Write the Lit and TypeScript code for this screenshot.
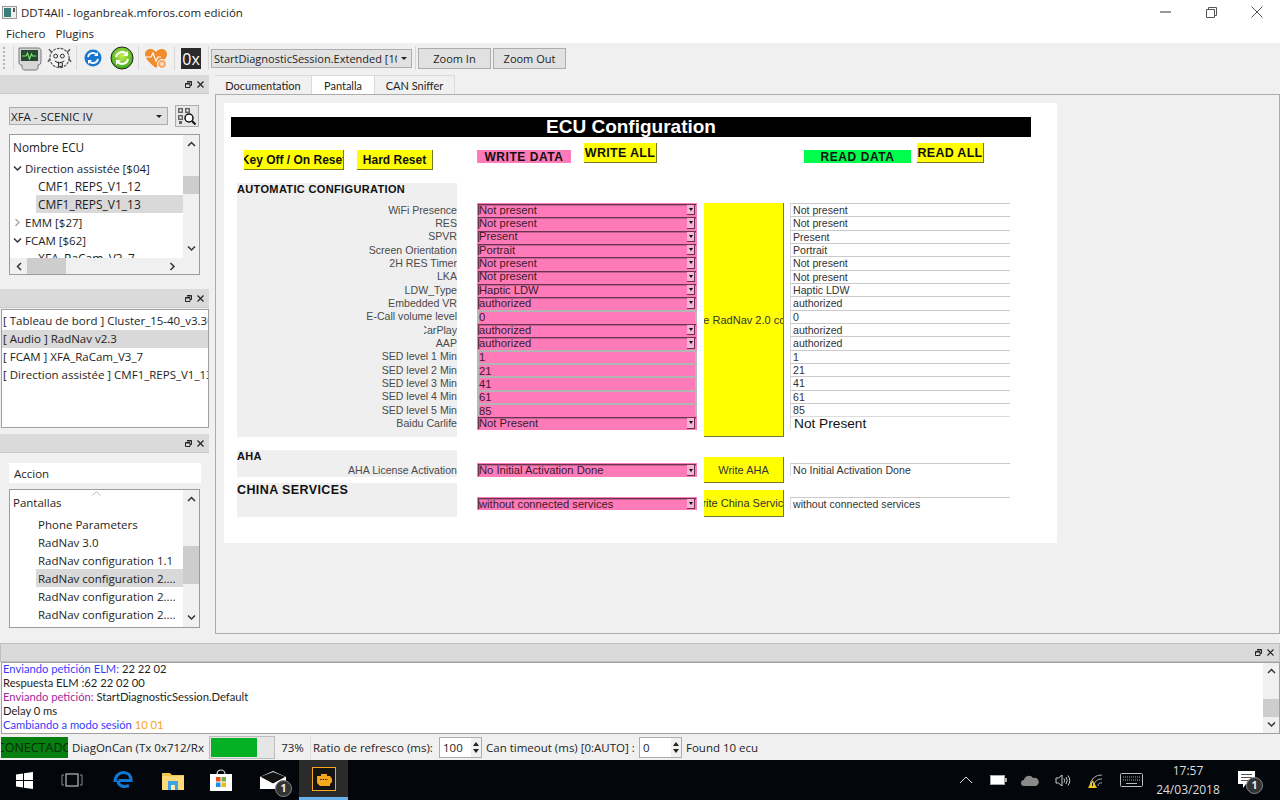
import { LitElement, html, css, svg } from "lit";
import { customElement } from "lit/decorators.js";

const ROW = 40 / 3;
const rows: { label: string; kind: "c" | "i"; value: string; big?: boolean; clip?: number }[] = [
  { label: "WiFi Presence", kind: "c", value: "Not present" },
  { label: "RES", kind: "c", value: "Not present" },
  { label: "SPVR", kind: "c", value: "Present" },
  { label: "Screen Orientation", kind: "c", value: "Portrait" },
  { label: "2H RES Timer", kind: "c", value: "Not present" },
  { label: "LKA", kind: "c", value: "Not present" },
  { label: "LDW_Type", kind: "c", value: "Haptic LDW" },
  { label: "Embedded VR", kind: "c", value: "authorized" },
  { label: "E-Call volume level", kind: "i", value: "0" },
  { label: "CarPlay", kind: "c", value: "authorized", clip: 33 },
  { label: "AAP", kind: "c", value: "authorized" },
  { label: "SED level 1 Min", kind: "i", value: "1" },
  { label: "SED level 2 Min", kind: "i", value: "21" },
  { label: "SED level 3 Min", kind: "i", value: "41" },
  { label: "SED level 4 Min", kind: "i", value: "61" },
  { label: "SED level 5 Min", kind: "i", value: "85" },
  { label: "Baidu Carlife", kind: "c", value: "Not Present", big: true },
];

const OX = 224;
const OY = 103;
const box = (x: number, y: number, w: number, h: number) =>
  `left:${x - OX}px;top:${y - OY}px;width:${w}px;height:${h}px`;

const chevDown = svg`<path d="M1 2.5 L4.5 6 L8 2.5" fill="none" stroke="#333" stroke-width="1.5"/>`;
const chevRight = svg`<path d="M2.5 1 L6 4.5 L2.5 8" fill="none" stroke="#a6a6a6" stroke-width="1.3"/>`;
const chevUp = svg`<path d="M1 6 L4.5 2.5 L8 6" fill="none" stroke="#333" stroke-width="1.5"/>`;
const chevLeft = svg`<path d="M6 1 L2.5 4.5 L6 8" fill="none" stroke="#333" stroke-width="1.5"/>`;
const chevR = svg`<path d="M2.5 1 L6 4.5 L2.5 8" fill="none" stroke="#333" stroke-width="1.5"/>`;
const ico9 = (p: unknown) => html`<svg width="9" height="9" viewBox="0 0 9 9">${p}</svg>`;

const dockBtns = html`<span class="dockbtns">
  <svg width="7" height="7" viewBox="0 0 7 7"><path d="M2 .5h4.500v4h-1.500M.5 2.500h4.500v4h-4.500z" fill="none" stroke="#222"/><path d="M2 1h4.500M.5 3h4.500" stroke="#222"/></svg>
  <svg width="7" height="7" viewBox="0 0 7 7"><path d="M.5 .5L6.500 6.500M6.500 .5L.5 6.500" stroke="#222" stroke-width="1.200"/></svg>
</span>`;

@customElement("app-root")
export class AppRoot extends LitElement {
  static styles = css`
    :host { display: block; width: 1280px; height: 800px; overflow: hidden; background: #f0f0f0;
      font-family: "Open Sans", "Noto Sans", sans-serif; font-size: 11.5px; color: #1e1e1e; }
    .app { display: flex; flex-direction: column; height: 800px; }
    .title { height: 24px; background: #fff; display: flex; align-items: center; flex: none; font-size: 11.5px; padding-left: 2px; gap: 4px; }
    .winbtns { margin-left: auto; display: flex; }
    .winbtns span { width: 46px; height: 24px; display: flex; align-items: center; justify-content: center; }
    .menu { height: 19px; background: #fff; display: flex; gap: 10px; padding-left: 6px; align-items: center; flex: none; }
    .toolbar { height: 30px; display: flex; align-items: center; flex: none; position: relative; padding-left: 3px; }
    .grip { width: 2px; height: 22px; border-left: 2px dotted #b5b5b5; margin-right: 6px; }
    .sep { width: 1px; height: 24px; background: #d8d8d8; flex: none; }
    .tcombo { width: 201px; height: 19px; margin-left: 2px; background: #e1e1e1; border: 1px solid #adadad; display: flex; align-items: center; padding-left: 2px; box-sizing: border-box; overflow: hidden; white-space: nowrap; font-size: 11px; position: relative; }
    .tcombo span { width: 183px; overflow: hidden; display: block; flex: none; }
    .tri { width: 0; height: 0; border: 3px solid transparent; border-top: 3px solid #222; border-bottom: 0; flex: none; }
    .tcombo .tri { margin-left: 4px; }
    .tbtn { width: 73px; height: 21px; box-sizing: border-box; background: #e1e1e1; border: 1px solid #adadad; display: flex; align-items: center; justify-content: center; flex: none; font-size: 11px; }

    .main { height: 567px; display: flex; flex: none; }
    .left { width: 212px; flex: none; padding-top: 2px; box-sizing: border-box; display: flex; flex-direction: column; }
    .dockh { height: 19px; width: 209px; background: #dadada; border: 1px solid #c8c8c8; border-width: 0 0 1px 0; flex: none; display: flex; align-items: center; justify-content: flex-end; box-sizing: border-box; }
    .dockbtns { display: flex; gap: 5px; padding-right: 5px; align-items: center; }
    .d1 { height: 195px; flex: none; width: 209px; box-sizing: border-box; padding: 11px 0 0 9px; }
    .row1 { display: flex; align-items: center; height: 22px; }
    .combo { width: 159px; height: 18px; background: #e1e1e1; border: 1px solid #adadad; box-sizing: border-box; display: flex; align-items: center; padding-left: 1px; justify-content: space-between; }
    .combo .tri { margin-right: 5px; }
    .scan { margin-left: 7px; width: 24px; height: 22px; box-sizing: border-box; border: 1px solid #adadad; background: #e6e6e6; display: flex; align-items: center; justify-content: center; }
    .tree { width: 191px; box-sizing: border-box; border: 1px solid #9c9c9c; background: #fff; display: grid; grid-template-columns: 173px 16px; overflow: hidden; }
    .t1 { margin-top: 7px; height: 141px; grid-template-rows: 123px 16px; }
    .t3 { margin-top: 6px; height: 139px; grid-template-rows: 137px; }
    .tbody { overflow: hidden; position: relative; }
    .th { height: 24px; line-height: 24px; padding-left: 3px; background: #fff; }
    .th.big { font-size: 11.8px; }
    .th.pant { height: 25px; line-height: 26px; }
    .ti { height: 18px; line-height: 17px; white-space: nowrap; display: flex; align-items: center; }
    .ti svg { margin: 0 3px 0 3px; flex: none; }
    .ti.lvl2 { margin-left: 26px; padding-left: 2px; }
    .t1 .ti.lvl2 { font-size: 12px; }
    .ti.lvl2.sel, .li.sel { background: #d9d9d9; }
    .vs { background: #f0f0f0; display: flex; flex-direction: column; align-items: center; justify-content: space-between; position: relative; padding: 5px 0; box-sizing: border-box; }
    .thumb { position: absolute; left: 0; width: 16px; background: #cdcdcd; }
    .t1 .thumb { top: 41px; height: 18px; }
    .t3 .thumb { top: 56px; height: 38px; }
    .hs { grid-column: 1 / 3; background: #f0f0f0; display: flex; align-items: center; justify-content: space-between; padding: 0 22px 0 5px; position: relative; }
    .hthumb { position: absolute; left: 17px; top: 0; width: 39px; height: 16px; background: #cdcdcd; }
    .list { margin: 1px 0 0 1px; width: 208px; height: 119px; box-sizing: border-box; border: 1px solid #a0a0a0; background: #fff; flex: none; padding-top: 2px; overflow: hidden; }
    .li { height: 18px; line-height: 17px; white-space: nowrap; overflow: hidden; padding-left: 1px; }
    .gap6 { height: 6px; flex: none; }
    .d3 { padding: 10px 0 0 9px; width: 209px; box-sizing: border-box; flex: none; }
    .accion { width: 192px; height: 20px; background: #fff; line-height: 21px; padding-left: 5px; box-sizing: border-box; }
    .caret { position: absolute; left: 82px; top: 1px; }

    .right { flex: 1; padding: 2px 0 0 3px; display: flex; flex-direction: column; min-width: 0; }
    .tabs { height: 19px; display: flex; flex: none; }
    .tab { display: flex; align-items: center; justify-content: center; background: #f0f0f0; border: 1px solid #dadada; border-bottom: 0; border-left: 0; box-sizing: border-box; font-family: Lato, "Open Sans", sans-serif; font-size: 11px; }
    .tab.doc { width: 97px; }
    .tab.on { background: #fff; width: 63px; }
    .tab.can { width: 80px; }
    .pane { height: 540px; flex: none; box-sizing: border-box; border: 1px solid #acacac; padding: 8px; background: #f0f0f0; }
    .canvas { position: relative; width: 833px; height: 440px; background: #fff; font-family: "Liberation Sans", Arial, sans-serif; font-size: 10.6px; color: #333; }
    .w { position: absolute; box-sizing: border-box; overflow: hidden; white-space: nowrap; display: flex; align-items: center; }
    .banner { background: #000; color: #fff; font-weight: bold; font-size: 19px; justify-content: center; }
    .yb { background: #ff0; color: #111; font-weight: bold; font-size: 12.5px; justify-content: center; border-right: 1px solid #77772a; border-bottom: 1px solid #77772a; letter-spacing: .3px; }
    .yb.nl { letter-spacing: 0; font-size: 12px; }
    .yb.sm { font-weight: normal; font-size: 11px; letter-spacing: 0; color: #333; }
    .tag { font-weight: bold; font-size: 12px; color: #111; justify-content: center; letter-spacing: .55px; padding-top: 1px; }
    .pink { background: #ff7ab8; }
    .green { background: #00ff4c; }
    .grey { background: #efefef; }
    .h { font-weight: bold; color: #111; font-size: 11px; letter-spacing: .35px; }
    .h.china { font-size: 12.5px; letter-spacing: .4px; }
    .lab { justify-content: flex-end; color: #4a4a4a; }
    .cb { background: #ff7ab8; border: 1px solid #ff7ab8; color: #3a1a2a; padding-left: 1px; font-size: 11.2px; box-shadow: inset 1px 1px 0 #6b3350, inset 2px 2px 0 #c2608f; }
    .arr { position: absolute; right: 1px; top: 1px; bottom: 0; width: 8px; background: #f7b4d4; border-right: 1px solid #6b3350; border-bottom: 1px solid #6b3350; display: flex; align-items: center; justify-content: center; box-sizing: border-box; }
    .arr .tri { border-width: 3px 2.500px 0; border-top-color: #111; }
    .inp { background: #ff7ab8; border-top: 2px solid #b4b4b4; border-left: 2px solid #b8b8b8; border-right: 2px solid #b8b8b8; color: #3a1a2a; padding-left: 0; font-size: 11.2px; }
    .rd { background: #fff; border-top: 1px solid #c9c9c9; border-left: 1px solid #dcdcdc; padding-left: 2px; color: #333; }
    .rd.big { font-size: 13.7px; color: #111; border-top-color: #dcdcdc; padding-left: 3px; }
    .ytext { display: block; flex: none; }

    .logdock { height: 95px; flex: none; padding-top: 3px; box-sizing: border-box; display: flex; flex-direction: column; }
    .logh { height: 19px; flex: none; background: #dadada; border: 1px solid #c0c0c0; box-sizing: border-box; display: flex; justify-content: flex-end; align-items: center; }
    .logb { height: 72px; flex: none; box-sizing: border-box; border: 1px solid #a0a0a0; background: #fff; display: flex; margin: 0 0 0 1px; font-family: Lato, "Open Sans", sans-serif; font-size: 11.2px; }
    .lines { flex: 1; overflow: hidden; padding-left: 1px; }
    .lines div { height: 14px; line-height: 14px; white-space: nowrap; }
    .lines div:first-child { margin-top: -1px; }
    .b { color: #3a3aff; } .p { color: #a5289b; } .o { color: #f5a623; }
    .lvs { width: 16px; background: #f0f0f0; position: relative; display: flex; flex-direction: column; justify-content: space-between; align-items: center; padding: 4px 0; box-sizing: border-box; }
    .lvs i { position: absolute; left: 0; bottom: 16px; width: 16px; height: 18px; background: #cdcdcd; }

    .status { height: 25px; flex: none; display: flex; align-items: center; background: #f0f0f0; }
    .conn { margin-left: 1px; width: 67px; height: 21px; background: #067f10; overflow: hidden; white-space: nowrap; display: flex; justify-content: center; flex: none; line-height: 21px; color: #0a2c0a; font-size: 12.5px; }
    .st { white-space: nowrap; overflow: hidden; flex: none; box-sizing: border-box; }
    .st.diag { width: 133px; margin-left: 4px; }
    .st.pct { width: 35px; text-align: center; }
    .st.ratio { width: 128px; padding-left: 2px; }
    .st.can { width: 157px; padding-left: 4px; }
    .st.found { padding-left: 4px; }
    .prog { width: 66px; height: 23px; flex: none; box-sizing: border-box; border: 1px solid #bcbcbc; background: #e6e6e6; margin-left: 4px; padding: 1px; }
    .prog i { display: block; width: 46px; height: 100%; background: #06b025; }
    .vsep { width: 1px; height: 22px; background: #dedede; flex: none; }
    .spin { width: 43px; height: 21px; box-sizing: border-box; border: 1px solid #adadad; background: #fff; flex: none; display: flex; align-items: center; padding-left: 3px; position: relative; }
    .spin b { position: absolute; right: 0; top: 0; bottom: 0; width: 10px; background: #f0f0f0; display: flex; flex-direction: column; align-items: center; justify-content: space-around; padding: 2px 0; box-sizing: border-box; }
    .up { width: 0; height: 0; border: 3px solid transparent; border-bottom: 4px solid #222; border-top: 0; }
    .dn { width: 0; height: 0; border: 3px solid transparent; border-top: 4px solid #222; border-bottom: 0; }

    .task { height: 40px; flex: none; background: #03060b; display: flex; align-items: center; position: relative; color: #e8e8e8; }
    .ti2 { flex: none; display: flex; align-items: center; justify-content: center; height: 40px; }
    .active { width: 49px; background: #2b2b2b; border-bottom: 3px solid #6ab0e8; box-sizing: border-box; }
    .tray { margin-left: auto; display: flex; align-items: center; height: 40px; }
    .clock { width: 74px; text-align: center; font-size: 12px; line-height: 19px; flex: none; color: #ddd; }
    .badge { position: absolute; width: 15px; height: 15px; border-radius: 50%; background: #333; border: 1px solid #888; color: #eee; font-size: 10.5px; line-height: 15px; text-align: center; font-weight: bold; box-sizing: content-box; }
    .wrapb { position: relative; display: flex; }
    .notif { width: 55px; justify-content: flex-start; padding-left: 13px; box-sizing: border-box; }
    .s2 { width: 2px; flex: none; } .s3 { width: 3px; flex: none; } .s4 { width: 4px; flex: none; } .s5 { width: 5px; flex: none; } .s6 { width: 6px; flex: none; } .s7 { width: 7px; flex: none; } .s8 { width: 8px; flex: none; }
    .hex { width: 20px; height: 21px; background: #2a2a2a; color: #fff; font-size: 16px; line-height: 22px; text-align: center; flex: none; overflow: hidden; }
    .winlogo { flex: none; margin-left: 0; }
    svg.f { flex: none; }
  `;

  private monitor() {
    return html`<svg class="f" width="24" height="25" viewBox="0 0 24 25"><path d="M1 2h19c2 0 3 1 3 3v10c0 3-1 4-3 4v3c0 1-1 2-2 2H7c-2 0-3-1-3-3v-2H3c-1 0-2-1-2-2z" fill="#d6d6d6" stroke="#777"/><rect x="3" y="4" width="17" height="11" fill="#27492f"/><path d="M4 10h4l1.500-3 2 6 2-5 1 2h4" fill="none" stroke="#7de06a" stroke-width="1.200"/></svg>`;
  }
  private dog() {
    return html`<svg class="f" width="25" height="26" viewBox="0 0 26 26"><circle cx="13" cy="13" r="10" fill="#f4f4f4" stroke="#555" stroke-width="1.200" stroke-dasharray="3 1"/><path d="M5 7L2 4M21 7l3-3M3 14l-2 3M23 14l2 3" stroke="#555" stroke-width="1.500"/><circle cx="9" cy="11" r="2" fill="none" stroke="#222"/><circle cx="16" cy="11" r="2" fill="none" stroke="#222"/><path d="M8 16q5 4 10 0M12 17v5h4v-4" fill="#ddd" stroke="#222"/></svg>`;
  }
  private refresh() {
    return html`<svg class="f" width="18" height="18" viewBox="0 0 18 18"><circle cx="9" cy="9" r="8.500" fill="#1777d0"/><path d="M4 8a5 5 0 0 1 9-2M14 10a5 5 0 0 1-9 2" fill="none" stroke="#fff" stroke-width="1.800"/><path d="M14 3v4h-4zM4 15v-4h4z" fill="#fff"/></svg>`;
  }
  private green() {
    return html`<svg class="f" width="24" height="24" viewBox="0 0 24 24"><defs><radialGradient id="g" cx=".5" cy=".4" r=".6"><stop offset="0" stop-color="#c9ee4a"/><stop offset="1" stop-color="#37a81c"/></radialGradient></defs><circle cx="12" cy="12" r="11" fill="url(#g)" stroke="#222" stroke-width="1"/><path d="M6 11a6 6 0 0 1 11-2M18 13a6 6 0 0 1-11 2" fill="none" stroke="#fff" stroke-width="2"/><path d="M18 5v5h-5zM6 19v-5h5z" fill="#fff"/></svg>`;
  }
  private heart() {
    return html`<svg class="f" width="24" height="23" viewBox="0 0 24 23"><path d="M12 21C6 16 1 12 1 7c0-3 2.500-5 5.500-5 2.500 0 4.500 1.500 5.500 3 1-1.500 3-3 5.500-3 3 0 5.500 2 5.500 5 0 5-6 9-11.500 14z" fill="#f28a2e"/><path d="M1 10h6l2-4 3 8 2-4h3" fill="none" stroke="#fff" stroke-width="1.200"/><circle cx="18" cy="17" r="4.500" fill="#f6a76a" stroke="#fff"/><path d="M18 15v4M16 17h4" stroke="#fff"/></svg>`;
  }
  private scan() {
    return html`<svg width="20" height="18" viewBox="0 0 20 18"><g fill="#666"><rect x="1" y="1" width="5" height="5"/><rect x="8" y="1" width="5" height="5"/><rect x="1" y="8" width="5" height="5"/><rect x="2" y="14" width="3" height="3"/></g><rect x="2.500" y="2.500" width="2" height="2" fill="#fff"/><rect x="9.500" y="2.500" width="2" height="2" fill="#fff"/><rect x="2.500" y="9.500" width="2" height="2" fill="#fff"/><circle cx="12" cy="11" r="4" fill="#fff" stroke="#111" stroke-width="1.500"/><path d="M15 14l3.500 3.500" stroke="#111" stroke-width="2"/></svg>`;
  }

  private yellow(x: number, y: number, w: number, h: number, t: string, cls = "yb") {
    return html`<div class="w ${cls}" style=${box(x, y, w, h)}><span class="ytext">${t}</span></div>`;
  }

  private canvas() {
    const ry = (i: number) => 203 + i * ROW;
    return html`<div class="canvas">
      <div class="w banner" style=${box(231, 117, 800, 20)}>ECU Configuration</div>
      ${this.yellow(244, 150, 100, 20, "Key Off / On Reset", "yb nl")}
      ${this.yellow(357, 150, 76, 20, "Hard Reset", "yb nl")}
      <div class="w tag pink" style=${box(477, 150, 94, 13)}>WRITE DATA</div>
      ${this.yellow(584, 143, 73, 20, "WRITE ALL")}
      <div class="w tag green" style=${box(804, 150, 107, 13)}>READ DATA</div>
      ${this.yellow(917, 143, 67, 20, "READ ALL")}

      <div class="w grey" style=${box(237, 183, 220, 254)}></div>
      <div class="w h" style=${box(237, 182, 220, 13)}>AUTOMATIC CONFIGURATION</div>
      ${rows.map((r, i) => html`
        <div class="w lab" style=${box(r.clip ? 457 - r.clip : 237, ry(i), r.clip ?? 220, ROW)}>${r.label}</div>
        ${r.kind === "c"
          ? html`<div class="w cb" style=${box(477, ry(i), 220, ROW)}>${r.value}<span class="arr"><i class="tri"></i></span></div>`
          : html`<div class="w inp" style=${box(477, ry(i), 220, ROW)}>${r.value}</div>`}
        <div class="w rd ${r.big ? "big" : ""}" style=${box(790, ry(i), 220, ROW)}>${r.value}</div>
      `)}
      ${this.yellow(704, 203, 80, 234, "Write RadNav 2.0 config", "yb sm")}

      <div class="w grey" style=${box(237, 450, 220, 27)}></div>
      <div class="w h" style=${box(237, 449, 220, 13)}>AHA</div>
      <div class="w lab" style=${box(237, 463, 220, 14)}>AHA License Activation</div>
      <div class="w cb" style=${box(477, 463, 220, 14)}>No Initial Activation Done<span class="arr"><i class="tri"></i></span></div>
      ${this.yellow(704, 457, 80, 26, "Write AHA", "yb sm")}
      <div class="w rd" style=${box(790, 463, 220, 13)}>No Initial Activation Done</div>

      <div class="w grey" style=${box(237, 483, 220, 34)}></div>
      <div class="w h china" style=${box(237, 483, 220, 14)}>CHINA SERVICES</div>
      <div class="w cb" style=${box(477, 497, 220, 13)}>without connected services<span class="arr"><i class="tri"></i></span></div>
      ${this.yellow(704, 490, 80, 27, "Write China Services", "yb sm")}
      <div class="w rd" style=${box(790, 497, 220, 13)}>without connected services</div>
    </div>`;
  }

  private taskbar() {
    return html`<div class="task">
      <span class="ti2" style="width:48px"><svg width="17" height="17" viewBox="0 0 17 17"><path d="M0 2.500L7 1.500V8H0zM8 1.300L17 0V8H8zM0 9h7v6.500L0 14.500zM8 9h9v8L8 15.700z" fill="#fff"/></svg></span>
      <span class="ti2" style="width:47px"><svg width="22" height="14" viewBox="0 0 22 14"><rect x="5" y="1" width="12" height="12" fill="none" stroke="#ddd"/><path d="M3 2H1v10h2M19 2h2v10h-2" fill="none" stroke="#888"/></svg></span>
      <span class="ti2" style="width:56px"><svg width="22" height="22" viewBox="0 0 22 22"><path d="M3 13c0-6 4-9.500 8.500-9.500S19 6.500 19 11.500H6.500M6 11.500c0 5 5 7.500 11 5" fill="none" stroke="#0f78d4" stroke-width="3.200"/></svg></span>
      <span class="ti2" style="width:44px"><svg width="22" height="19" viewBox="0 0 22 19"><path d="M0 2h8l2 2h12v15H0z" fill="#f2c24f"/><rect x="0" y="5" width="22" height="14" fill="#ffd97a"/><rect x="6" y="10" width="10" height="9" fill="#3ba4e8"/><rect x="9" y="14" width="4" height="5" fill="#ffe9b0"/></svg></span>
      <span class="ti2" style="width:52px"><svg width="24" height="24" viewBox="0 0 24 24"><path d="M8 6a4 4 0 0 1 8 0" fill="none" stroke="#ddd" stroke-width="1.200"/><rect x="1" y="6" width="22" height="17" fill="#fff"/><rect x="7" y="9" width="4.500" height="4.500" fill="#e74c1c"/><rect x="12.500" y="9" width="4.500" height="4.500" fill="#6cb33f"/><rect x="7" y="14.500" width="4.500" height="4.500" fill="#1c8fe0"/><rect x="12.500" y="14.500" width="4.500" height="4.500" fill="#f5b912"/></svg></span>
      <span class="ti2" style="width:52px"><span class="wrapb"><svg width="26" height="18" viewBox="0 0 26 18"><path d="M0 6L13 0l13 6v12H0z" fill="#fff"/><path d="M0 6l13 7 13-7-13-5z" fill="#111"/><path d="M0 6l13 7 13-7" fill="none" stroke="#fff"/></svg><span class="badge" style="left:15px;top:9px">1</span></span></span>
      <span class="ti2 active"><svg width="24" height="24" viewBox="0 0 24 24"><rect x=".5" y=".5" width="23" height="23" fill="#141414" stroke="#f5a81c"/><path d="M5 9h4V7h6v2h3l2 3v3l-2 2v2H8l-3-3z" fill="#f5a81c"/><path d="M8 12.500h8" stroke="#222" stroke-dasharray="1.500 1"/></svg></span>
      <div class="tray">
        <span class="ti2" style="width:32px"><svg width="14" height="8" viewBox="0 0 14 8"><path d="M1 7l6-6 6 6" fill="none" stroke="#ddd"/></svg></span>
        <span class="ti2" style="width:32px"><svg width="17" height="10" viewBox="0 0 17 10"><rect x=".5" y=".5" width="14" height="9" fill="#fff" stroke="#aaa"/><rect x="15" y="3" width="2" height="4" fill="#aaa"/></svg></span>
        <span class="ti2" style="width:32px"><svg width="18" height="11" viewBox="0 0 18 11"><path d="M3 11a3 3 0 0 1 0-6 5 5 0 0 1 9-2 4 4 0 0 1 3 8z" fill="#8a8a8a"/></svg></span>
        <span class="ti2" style="width:33px"><svg width="16" height="13" viewBox="0 0 16 13"><path d="M1 4h2.500L7 1v11L3.500 9H1z" fill="none" stroke="#ccc"/><path d="M9 4.500q1.500 2 0 4M11 3q2.500 3.500 0 7M13 1.500q3.500 5 0 10" fill="none" stroke="#ccc"/></svg></span>
        <span class="ti2" style="width:33px"><svg width="16" height="15" viewBox="0 0 16 15"><path d="M2 13A11 11 0 0 1 14 2M6 13a7 7 0 0 1 8-7M10 13a3 3 0 0 1 4-3" fill="none" stroke="#aaa"/><path d="M4.500 7L0 15h9z" fill="#f5c518"/><path d="M4.500 10v3" stroke="#111"/></svg></span>
        <span class="ti2" style="width:39px"><svg width="23" height="14" viewBox="0 0 23 14"><rect x=".5" y=".5" width="22" height="13" rx="1" fill="none" stroke="#bbb"/><path d="M3 4h17M3 7h17" stroke="#aaa" stroke-dasharray="1 1"/><path d="M6 10.500h11" stroke="#bbb"/></svg></span>
        <div class="clock">17:57<br />24/03/2018</div>
        <span class="ti2 notif"><span class="wrapb"><svg width="17" height="18" viewBox="0 0 17 18"><path d="M0 0h17v13H8l-3 4v-4H0z" fill="#fff"/><path d="M3 3.500h11M3 6.500h11M3 9.500h7" stroke="#555"/></svg><span class="badge" style="left:8px;top:6px">1</span></span></span>
      </div>
    </div>`;
  }

  render() {
    return html`<div class="app">
      <div class="title">
        <svg class="winlogo" width="15" height="13" viewBox="0 0 15 13"><rect x=".5" y=".5" width="14" height="12" fill="#eee" stroke="#999"/><rect x="2" y="2" width="7" height="9" fill="#3c7f7a"/><rect x="11" y="2" width="2" height="4" fill="#555"/></svg>
        <span>DDT4All - loganbreak.mforos.com edición</span>
        <div class="winbtns">
          <span><svg width="11" height="2" viewBox="0 0 11 2"><rect width="11" height="2" fill="#999"/></svg></span>
          <span><svg width="11" height="11" viewBox="0 0 11 11"><path d="M.5 2.500h8v8h-8zM2.500 2.500v-2h8v8h-2" fill="none" stroke="#555"/></svg></span>
          <span><svg width="12" height="12" viewBox="0 0 12 12"><path d="M.5 .5l11 11M11.500 .5l-11 11" stroke="#555"/></svg></span>
        </div>
      </div>
      <div class="menu"><span>Fichero</span><span>Plugins</span></div>
      <div class="toolbar">
        <span class="grip"></span><span class="sep"></span>
        <span class="s4"></span>${this.monitor()}<span class="s5"></span>${this.dog()}
        <span class="s4"></span><span class="sep"></span><span class="s7"></span>${this.refresh()}
        <span class="s8"></span>${this.green()}<span class="s4"></span><span class="sep"></span>
        <span class="s5"></span>${this.heart()}<span class="s6"></span><span class="sep"></span><span class="s6"></span>
        <span class="hex">0x</span>
        <span class="s7"></span><span class="sep"></span>
        <div class="tcombo"><span>StartDiagnosticSession.Extended [10</span><i class="tri"></i></div>
        <span class="s3"></span><span class="sep"></span><span class="s2"></span>
        <div class="tbtn">Zoom In</div><span class="s2"></span><div class="tbtn">Zoom Out</div>
      </div>
      <div class="main">
        <div class="left">
          <div class="dockh">${dockBtns}</div>
          <div class="d1">
            <div class="row1"><div class="combo"><span>XFA - SCENIC IV</span><i class="tri"></i></div><div class="scan">${this.scan()}</div></div>
            <div class="tree t1">
              <div class="tbody">
                <div class="th big">Nombre ECU</div>
                <div class="ti">${ico9(chevDown)}<span>Direction assistée [$04]</span></div>
                <div class="ti lvl2"><span>CMF1_REPS_V1_12</span></div>
                <div class="ti lvl2 sel"><span>CMF1_REPS_V1_13</span></div>
                <div class="ti">${ico9(chevRight)}<span>EMM [$27]</span></div>
                <div class="ti">${ico9(chevDown)}<span>FCAM [$62]</span></div>
                <div class="ti lvl2"><span>XFA_RaCam_V3_7</span></div>
              </div>
              <div class="vs"><i class="thumb"></i>${ico9(chevUp)}${ico9(chevDown)}</div>
              <div class="hs"><i class="hthumb"></i>${ico9(chevLeft)}${ico9(chevR)}</div>
            </div>
          </div>
          <div class="dockh">${dockBtns}</div>
          <div class="list">
            <div class="li">[ Tableau de bord ] Cluster_15-40_v3.30</div>
            <div class="li sel">[ Audio ] RadNav v2.3</div>
            <div class="li">[ FCAM ] XFA_RaCam_V3_7</div>
            <div class="li">[ Direction assistée ] CMF1_REPS_V1_13</div>
          </div>
          <div class="gap6"></div>
          <div class="dockh">${dockBtns}</div>
          <div class="d3">
            <div class="accion">Accion</div>
            <div class="tree t3">
              <div class="tbody">
                <svg class="caret" width="9" height="5" viewBox="0 0 9 5"><path d="M.5 4.500L4.500 .5l4 4" fill="none" stroke="#bbb"/></svg>
                <div class="th pant">Pantallas</div>
                <div class="ti lvl2"><span>Phone Parameters</span></div>
                <div class="ti lvl2"><span>RadNav 3.0</span></div>
                <div class="ti lvl2"><span>RadNav configuration 1.1</span></div>
                <div class="ti lvl2 sel"><span>RadNav configuration 2....</span></div>
                <div class="ti lvl2"><span>RadNav configuration 2....</span></div>
                <div class="ti lvl2"><span>RadNav configuration 2....</span></div>
                <div class="ti lvl2"><span>RadNav configuration 3</span></div>
              </div>
              <div class="vs"><i class="thumb"></i>${ico9(chevUp)}${ico9(chevDown)}</div>
            </div>
          </div>
        </div>
        <div class="right">
          <div class="tabs">
            <div class="tab doc">Documentation</div>
            <div class="tab on">Pantalla</div>
            <div class="tab can">CAN Sniffer</div>
          </div>
          <div class="pane">${this.canvas()}</div>
        </div>
      </div>
      <div class="logdock">
        <div class="logh">${dockBtns}</div>
        <div class="logb">
          <div class="lines">
            <div><span class="b">Enviando petición ELM:</span> 22 22 02</div>
            <div>Respuesta ELM :62 22 02 00</div>
            <div><span class="p">Enviando petición:</span> StartDiagnosticSession.Default</div>
            <div>Delay 0 ms</div>
            <div><span class="b">Cambiando a modo sesión</span> <span class="o">10 01</span></div>
          </div>
          <div class="lvs"><i></i>${ico9(chevUp)}${ico9(chevDown)}</div>
        </div>
      </div>
      <div class="status">
        <div class="conn">CONECTADO</div>
        <span class="st diag">DiagOnCan (Tx 0x712/Rx 0x7</span>
        <div class="prog"><i></i></div>
        <span class="st pct">73%</span>
        <span class="vsep"></span>
        <span class="st ratio">Ratio de refresco (ms):</span>
        <div class="spin">100<b><i class="up"></i><i class="dn"></i></b></div>
        <span class="st can">Can timeout (ms) [0:AUTO] :</span>
        <div class="spin">0<b><i class="up"></i><i class="dn"></i></b></div>
        <span class="st found">Found 10 ecu</span>
      </div>
      ${this.taskbar()}
    </div>`;
  }
}
